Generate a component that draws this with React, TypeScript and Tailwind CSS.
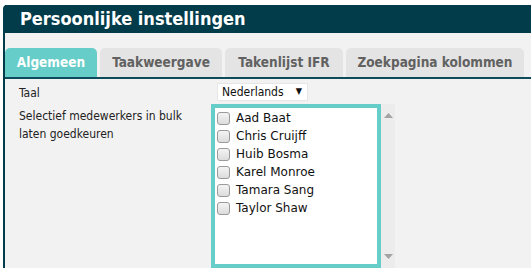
import React from "react";

const names = ["Aad Baat", "Chris Cruijff", "Huib Bosma", "Karel Monroe", "Tamara Sang", "Taylor Shaw"];

function Box() {
  return (
    <span className="inline-block w-[13px] h-[13px] rounded-[3px] border border-[#9a9a9a] bg-gradient-to-b from-[#f4f4f4] to-[#dcdcdc] shrink-0" />
  );
}

const cond = "font-['DejaVu_Sans_Condensed','DejaVu_Sans',sans-serif]";

export default function App() {
  return (
    <div className="w-[531px] h-[268px] bg-white overflow-hidden pl-[3px] pt-[5px] font-['DejaVu_Sans',Verdana,sans-serif]">
      <div className="w-[560px] h-[300px] bg-[#f2f2f2] border-l-2 border-[#023c4b] rounded-tl-[4px] flex flex-col">
        <div className="h-[28px] bg-[#023c4b] flex items-center pl-[15px]">
          <span className={`text-white font-bold text-[18px] leading-none ${cond}`}>Persoonlijke instellingen</span>
        </div>
        <div className={`mt-[15px] flex gap-[3px] border-b-2 border-[#0d4a5a] h-[31px] items-end ${cond}`}>
          <div className="h-[29px] w-[92px] rounded-t-[5px] bg-[#66cdc8] text-white font-bold text-[13.5px] flex items-center justify-center">Algemeen</div>
          <div className="h-[29px] w-[122px] rounded-t-[5px] bg-[#e4e4e4] text-[#616161] font-bold text-[13.5px] flex items-center justify-center">Taakweergave</div>
          <div className="h-[29px] w-[118px] rounded-t-[5px] bg-[#e4e4e4] text-[#616161] font-bold text-[13.5px] flex items-center justify-center">Takenlijst IFR</div>
          <div className="h-[29px] w-[178px] rounded-t-[5px] bg-[#e4e4e4] text-[#616161] font-bold text-[13.5px] flex items-center justify-center">Zoekpagina kolommen</div>
        </div>
        <div className="flex pt-[4px]">
          <div className={`w-[206px] pl-[14px] text-[12px] leading-[18px] text-[#222] ${cond}`}>
            <div className="h-[18px] mt-[1px]">Taal</div>
            <div className="mt-[5px] w-[180px]">Selectief medewerkers in bulk laten goedkeuren</div>
          </div>
          <div className="flex flex-col">
            <div className={`ml-[6px] w-[91px] h-[18px] bg-white border border-[#e6e6e6] flex items-center justify-between pl-[4px] pr-[5px] text-[12px] text-[#111] ${cond}`}>
              <span>Nederlands</span>
              <span className="text-[9px]">▼</span>
            </div>
            <div className="flex mt-[3px]">
              <div className="w-[170px] h-[164px] border-4 border-[#66cdc8] bg-white pt-[1px] pl-[2px]">
                {names.map((n) => (
                  <div key={n} className="h-[18px] flex items-center gap-[6px] text-[12px] text-[#111]">
                    <Box />
                    <span>{n}</span>
                  </div>
                ))}
              </div>
              <div className="w-[14px] h-[164px] bg-[#ececec] flex flex-col items-center justify-between py-[9px]">
                <svg width="9" height="5" viewBox="0 0 9 5"><path d="M0 5 L4.5 0 L9 5Z" fill="#a3a3a3" /></svg>
                <svg width="9" height="5" viewBox="0 0 9 5"><path d="M0 0 L4.5 5 L9 0Z" fill="#a3a3a3" /></svg>
              </div>
            </div>
            <div className="ml-[7px] w-[11px] h-[3px] bg-[#c8c8c8] rounded-t-[2px]" />
          </div>
        </div>
      </div>
    </div>
  );
}
